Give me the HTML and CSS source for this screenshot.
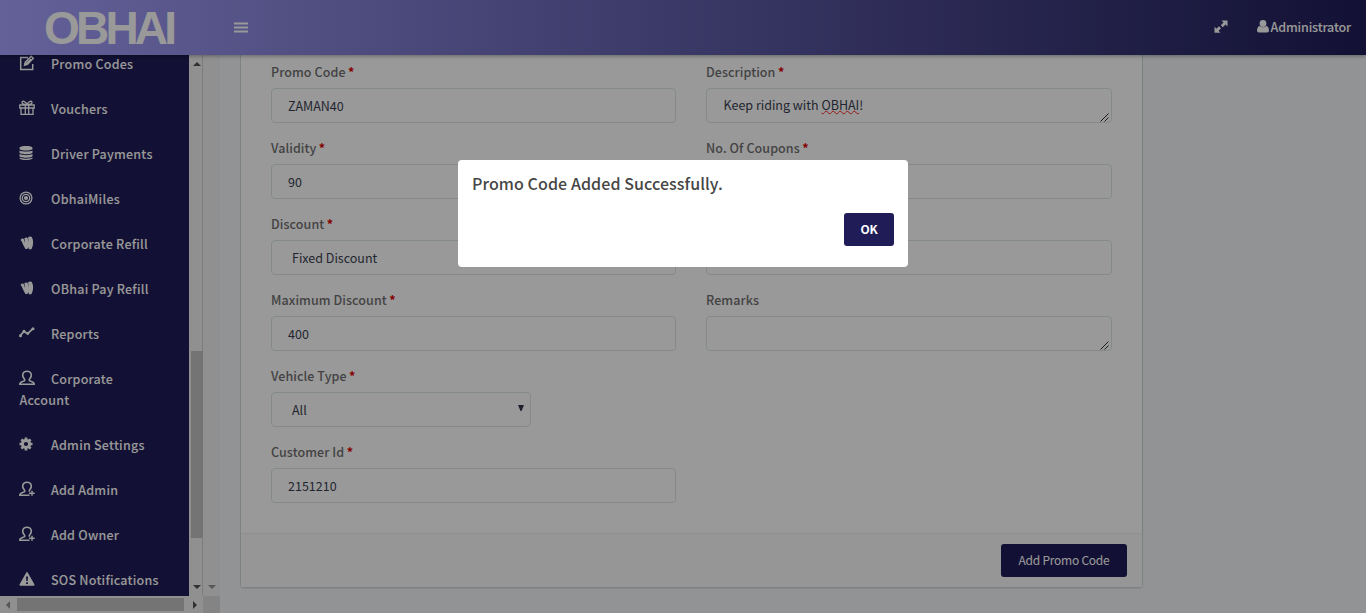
FILE: index.html
```html
<!DOCTYPE html>
<html lang="en">
<head>
<meta charset="utf-8">
<title>Promo Codes</title>
<link rel="stylesheet" href="styles.css">
</head>
<body>
<svg class="defs" width="0" height="0">
  <symbol id="edit" viewBox="0 0 16 16"><path d="M9 2.5H1.700v12h12V9M6.300 7.200l5.800-6 2.200 2.100-5.900 6-2.800.8zM7 9l5-5" fill="none" stroke="currentColor" stroke-width="1.500"/></symbol>
  <symbol id="gift" viewBox="0 0 16 16"><path d="M.8 5h14.400v3H.8zM2 8v6.300h12V8M6.300 5v9M9.700 5v9M8 4.600C6.500 1 3 .3 3 2.600c0 1.500 2.400 2 5 2 2.600 0 5-.5 5-2C13 .3 9.500 1 8 4.600z" fill="none" stroke="currentColor" stroke-width="1.300"/></symbol>
  <symbol id="db" viewBox="0 0 16 16"><path d="M.5 3C.5.4 13.500.4 13.500 3v.8c0 2.400-13 2.400-13 0zM.5 5.400c2 1.500 11 1.500 13 0v2c0 2.300-13 2.300-13 0zM.5 9c2 1.500 11 1.500 13 0v2c0 2.300-13 2.300-13 0zM.5 12.500c2 1.500 11 1.500 13 0v.8c0 2.400-13 2.400-13 0z" fill="currentColor"/></symbol>
  <symbol id="target" viewBox="0 0 16 16"><g fill="none" stroke="currentColor" stroke-width="1.300"><circle cx="7" cy="8" r="5.900"/><circle cx="7" cy="8" r="3.700"/></g><circle cx="7" cy="8" r="2.100" fill="currentColor"/></symbol>
  <symbol id="wallet" viewBox="0 0 16 16"><path d="M1.500 5C3 3 4.500 3.300 5 4.500l1 3.500C6 5 5.500 4 5.200 3.300 7.500 1.800 8.800 2.500 9 4l.5 3.500C9.600 5 9.300 3 9 2.200 10 1.300 12 1.200 12.800 2c1.900 3.500 1.800 8-.3 12-.8.600-2 .600-2.700 0L9.300 12c-.3 1-.6 1.500-1 1.900-.8.300-1.500.200-2-.200L4 9.500C3.300 7.500 2.500 5.800 1.500 5z" fill="currentColor"/></symbol>
  <symbol id="chart" viewBox="0 0 16 16"><path d="M.8 11 5 6.400l3.700 2.300 5.200-5" fill="none" stroke="currentColor" stroke-width="1.800"/><g fill="currentColor"><circle cx="1.500" cy="10.800" r="1.500"/><circle cx="5" cy="6.300" r="1.500"/><circle cx="8.800" cy="8.500" r="1.400"/><circle cx="14" cy="3.800" r="1.500"/></g></symbol>
  <symbol id="user" viewBox="0 0 16 16"><path d="M5.700 9.500C1.800 5.500 4 1.200 8 1.200s6.200 4.300 2.300 8.300v1.200c1 .8 4.900.7 4.900 3.600H.8c0-2.900 3.900-2.800 4.900-3.600z" fill="none" stroke="currentColor" stroke-width="1.500"/></symbol>
  <symbol id="useradd" viewBox="0 0 16 16"><path d="M10.500 14.300H.8c0-2.900 3.900-2.800 4.900-3.600V9.500C1.800 5.500 4 1.200 8 1.200s6.200 4.300 2.300 8.300v1.300M10 12.300h5.700M13 9.800v5" fill="none" stroke="currentColor" stroke-width="1.500"/></symbol>
  <symbol id="gear" viewBox="0 0 16 16"><circle cx="7" cy="8" r="3.600" fill="none" stroke="currentColor" stroke-width="3"/><path d="M7 1.500v2.500M7 12v2.500M.5 8H3M11 8h2.500M2.400 3.400l1.800 1.800M9.800 10.800l1.800 1.800M11.600 3.400 9.800 5.200M4.200 10.800l-1.800 1.800" stroke="currentColor" stroke-width="2.700"/></symbol>
  <symbol id="warn" viewBox="0 0 16 16"><path fill-rule="evenodd" d="M7.300 1.500q.7-1 1.400 0l6.800 12q.3 1.200-1 1.200H1.500q-1.300 0-1-1.200zM7 5.500l.3 4.500h1.400L9 5.500zm.1 5.700v1.800h1.800v-1.800z" fill="currentColor"/></symbol>
</svg>

<header class="topbar">
  <div class="brand">OBHAI</div>
  <svg class="burger" width="14" height="12" viewBox="0 0 14 12"><path d="M0 1.500h14M0 5.500h14M0 9.500h14" stroke="#fff" stroke-width="2"/></svg>
  <svg class="expand" width="14" height="14" viewBox="0 0 14 14"><path d="M7.500.5h6v6l-2-2-2.700 2.700-2-2 2.700-2.700zM.5 6.800l2 2 2.500-2.500 2 2-2.500 2.500 2 2h-6z" fill="#fff"/></svg>
  <div class="account"><svg width="12" height="13" viewBox="0 0 12 13"><circle cx="6" cy="3.500" r="3.400" fill="#fff"/><path d="M2.500 5.700Q6 9 9.500 5.700C11.500 6.500 12 9 12 10.500q0 2-2 2H2q-2 0-2-2C0 9 .5 6.500 2.500 5.700z" fill="#fff"/></svg><span>Administrator</span></div>
</header>

<div class="layout">
  <aside class="side">
    <nav class="menu">
      <a class="item"><svg><use href="#edit"/></svg>Promo Codes</a>
      <a class="item"><svg><use href="#gift"/></svg>Vouchers</a>
      <a class="item"><svg><use href="#db"/></svg>Driver Payments</a>
      <a class="item"><svg><use href="#target"/></svg>ObhaiMiles</a>
      <a class="item"><svg><use href="#wallet"/></svg>Corporate Refill</a>
      <a class="item"><svg><use href="#wallet"/></svg>OBhai Pay Refill</a>
      <a class="item"><svg><use href="#chart"/></svg>Reports</a>
      <a class="item"><svg><use href="#user"/></svg>Corporate<br>Account</a>
      <a class="item"><svg><use href="#gear"/></svg>Admin Settings</a>
      <a class="item"><svg><use href="#useradd"/></svg>Add Admin</a>
      <a class="item"><svg><use href="#useradd"/></svg>Add Owner</a>
      <a class="item"><svg><use href="#warn"/></svg>SOS Notifications</a>
    </nav>
    <div class="vbar"><i class="tri up"></i><div class="vthumb"></div><i class="tri down"></i></div>
    <div class="outer"><i class="tri down faded"></i></div>
    <div class="hbar"><i class="tri left faded"></i><div class="hthumb"></div><i class="tri right"></i></div>
    <div class="corner"></div>
  </aside>

  <main class="content">
    <section class="card">
      <div class="form">
        <div class="field"><label>Promo Code <b>*</b></label><div class="control">ZAMAN40</div></div>
        <div class="field"><label>Description <b>*</b></label><div class="control area"><span>Keep riding with <u>OBHAI</u>!</span><svg class="grip" viewBox="0 0 9 9"><path d="M.5 8.500l8-8M4.500 8.500l4-4" stroke="#333"/></svg></div></div>
        <div class="field"><label>Validity <b>*</b></label><div class="control">90</div></div>
        <div class="field"><label>No. Of Coupons <b>*</b></label><div class="control"></div></div>
        <div class="field"><label>Discount <b>*</b></label><div class="control select">Fixed Discount</div></div>
        <div class="field"><label>Value <b>*</b></label><div class="control"></div></div>
        <div class="field"><label>Maximum Discount <b>*</b></label><div class="control">400</div></div>
        <div class="field"><label>Remarks</label><div class="control area"><svg class="grip" viewBox="0 0 9 9"><path d="M.5 8.500l8-8M4.500 8.500l4-4" stroke="#333"/></svg></div></div>
        <div class="field wide"><label>Vehicle Type <b>*</b></label><div class="control select short">All<svg class="caret" viewBox="0 0 6 6"><path d="M0 0h6L3.500 6h-1z" fill="#35324f"/></svg></div></div>
        <div class="field"><label>Customer Id <b>*</b></label><div class="control">2151210</div></div>
      </div>
      <footer class="actions"><div class="btn">Add Promo Code</div></footer>
    </section>
  </main>
</div>

<div class="overlay">
  <div class="dialog">
    <div class="message">Promo Code Added Successfully.</div>
    <div class="btn ok">OK</div>
  </div>
</div>
</body>
</html>
```
FILE: styles.css
```css
* { box-sizing: border-box; }
body {
  margin: 0;
  height: 613px;
  overflow: hidden;
  background: #f4f6f9;
  color: #706f70;
  font: 12.5px/21px "Noto Sans CJK SC", "Open Sans", sans-serif;
}
.defs { display: block; }

.topbar {
  position: relative;
  display: flex;
  align-items: center;
  height: 55px;
  padding: 0 15px 0 44px;
  background: linear-gradient(to right, #a6a2ff, #1f1c57);
  box-shadow: 0 1px 4px rgba(0, 0, 0, .35);
  color: #fff;
}
.brand {
  width: 190px;
  font: bold 46px/55px "Liberation Sans", Arial, sans-serif;
  letter-spacing: -3.8px;
  padding-top: 1px;
}
.burger { display: block; }
.expand { margin-left: auto; margin-right: 29px; margin-top: -2px; }
.account { display: flex; align-items: center; gap: 2px; font-weight: 500; letter-spacing: -.15px; padding-bottom: 2px; }

.layout { display: flex; height: 558px; }
.side {
  display: grid;
  grid-template: 541px 17px / 189px 14px 17px;
  width: 220px;
  background: #f1f1f1;
}
.menu { overflow: hidden; background: #1f1c57; color: #fff; font-weight: 500; letter-spacing: .23px; }
.item { display: block; padding: 12px 19px 12px 19.500px; }
.item:first-child { margin-top: -14px; }
.item svg { width: 16px; height: 16px; margin: 0 16.300px 0 -.8px; vertical-align: -2px; color: #fff; }
.vbar {
  display: flex;
  flex-direction: column;
  align-items: center;
  padding: 7px 0 7px 2px;
  border-right: 1px solid #cfd0d2;
}
.vthumb { width: 12px; height: 187px; margin: 285px -1px auto 0; background: #c1c1c1; }
.outer { display: flex; align-items: flex-end; justify-content: center; padding-bottom: 7px; }
.hbar {
  grid-column: 1 / 3;
  display: flex;
  align-items: center;
  justify-content: space-between;
  padding: 0 6px;
}
.hthumb { width: 167px; height: 13px; margin-right: 2px; background: #c1c1c1; }
.corner { background: #dcdcdc; }
.tri { display: block; width: 0; height: 0; border: 0 solid transparent; }
.up { border-width: 0 4px 4px; border-bottom-color: #505050; }
.down { border-width: 4px 4px 0; border-top-color: #505050; }
.left { border-width: 4px 4px 4px 0; border-right-color: #505050; }
.right { border-width: 4px 0 4px 4px; border-left-color: #505050; }
.faded { opacity: .6; }

.content { padding-left: 20px; }
.card {
  width: 903px;
  height: 533px;
  border: 1px solid #d0dadd;
  border-top: 0;
  border-radius: 0 0 4px 4px;
  background: #fff;
  box-shadow: 0 1px 1px rgba(0, 0, 0, .08);
}
.form {
  display: grid;
  grid-template-columns: 405px 406px;
  column-gap: 30px;
  padding: 6px 30px 16px;
}
.field { height: 76px; }
.wide { grid-column: 1 / 3; }
.field label { display: block; height: 27px; font-weight: 500; letter-spacing: .08px; }
.field b { color: #e00000; font-weight: 700; margin-left: -.5px; }
.control {
  display: flex;
  align-items: center;
  height: 35px;
  padding: 0 16px;
  border: 1px solid #dde6e9;
  border-radius: 4px;
  color: #3a3f51;
}
.area { position: relative; padding: 0 16.500px 2px; }
.area u { text-decoration: underline wavy #f22 1px; text-underline-offset: 0; text-decoration-skip-ink: none; }
.grip { position: absolute; right: 2px; bottom: 0; width: 9px; height: 9px; }
.select { padding-left: 20px; }
.short { width: 260px; justify-content: space-between; padding-right: 6px; }
.caret { width: 6px; height: 6px; margin-bottom: 3px; }
.actions {
  display: flex;
  justify-content: flex-end;
  height: 54px;
  padding: 10px 15px;
  border-top: 1px solid #eee;
  background: #fafafa;
}
.btn {
  width: 126px;
  height: 33px;
  border-radius: 3px;
  background: #1f1c57;
  color: #fff;
  font-size: 12px;
  font-weight: 400;
  letter-spacing: -.25px;
  line-height: 32px;
  text-align: center;
}
.overlay {
  position: fixed;
  inset: 0;
  display: flex;
  align-items: flex-start;
  justify-content: center;
  padding-top: 160px;
  background: rgba(0, 0, 0, .4);
}
.dialog {
  display: flex;
  flex-direction: column;
  width: 450px;
  height: 107px;
  padding: 13px 14px 0;
  border-radius: 4px;
  background: #fff;
}
.message { height: 40px; color: #464646; font-size: 16px; font-weight: 500; letter-spacing: .08px; }
.ok { width: 50px; align-self: flex-end; font-weight: 700; letter-spacing: -.3px; line-height: 31px; }
```
